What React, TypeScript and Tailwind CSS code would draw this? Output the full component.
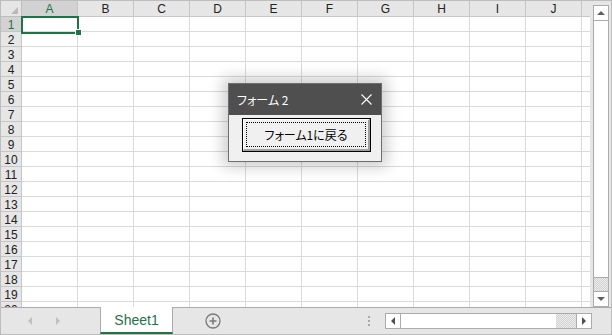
import React from "react";

const COLS = ["A", "B", "C", "D", "E", "F", "G", "H", "I", "J"];
const ROWS = Array.from({ length: 20 }, (_, i) => i + 1);

const checker =
  "bg-[repeating-conic-gradient(#d2d2d2_0_25%,#ececec_0_50%)] bg-[length:2px_2px]";

function Tri({ dir, color }: { dir: "l" | "r" | "u" | "d"; color: string }) {
  const pts =
    dir === "l"
      ? "4,0 4,8 0,4"
      : dir === "r"
      ? "0,0 0,8 4,4"
      : dir === "u"
      ? "0,4 8,4 4,0"
      : "0,0 8,0 4,4";
  const w = dir === "l" || dir === "r" ? 4 : 8;
  const h = dir === "l" || dir === "r" ? 8 : 4;
  return (
    <svg width={w} height={h} viewBox={`0 0 ${w} ${h}`}>
      <polygon points={pts} fill={color} />
    </svg>
  );
}

function Grid() {
  return (
    <div className="relative w-[589px] h-full overflow-hidden bg-white">
      {/* header */}
      <div className="flex h-[16px]">
        <div className="relative w-[21px] shrink-0 bg-[#e6e6e6] border-r border-b border-[#bdbdbd]">
          <svg className="absolute right-[3px] bottom-[2px]" width="7" height="7" viewBox="0 0 7 7">
            <polygon points="7,0 7,7 0,7" fill="#b9b9b9" />
          </svg>
        </div>
        {COLS.map((c) => (
          <div
            key={c}
            className={`w-[56px] shrink-0 border-r border-b border-[#c6c6c6] text-center text-[12px] leading-[17px] ${
              c === "A" ? "bg-[#d2d2d2] text-[#217346] border-b-[#217346]" : "bg-[#e6e6e6] text-[#222]"
            }`}
          >
            {c}
          </div>
        ))}
        <div className="flex-1 bg-[#e6e6e6] border-b border-[#c6c6c6]" />
      </div>
      {ROWS.map((r) => (
        <div key={r} className="flex h-[15px]">
          <div
            className={`w-[21px] shrink-0 border-r border-b border-[#c6c6c6] text-center text-[12px] leading-[16px] ${
              r === 1 ? "bg-[#d2d2d2] text-[#217346] border-r-[#217346]" : "bg-[#e6e6e6] text-[#222]"
            }`}
          >
            {r}
          </div>
          {COLS.map((c) => (
            <div key={c} className="w-[56px] shrink-0 border-r border-b border-[#dadada]" />
          ))}
          <div className="flex-1 border-b border-[#dadada]" />
        </div>
      ))}
      {/* selection */}
      <div className="absolute left-[20px] top-[15px] w-[58px] h-[18px] border-2 border-[#217346]" />
      <div className="absolute left-[74px] top-[28px] w-[7px] h-[7px] bg-[#217346] border border-white" />
    </div>
  );
}

function VScroll() {
  return (
    <div className="w-[21px] h-full bg-[#e6e6e6] pt-[4px] pl-[3px] pr-[2px] flex">
      <div className={`flex-1 flex flex-col border border-[#ababab] ${checker}`}>
        <div className="h-[15px] shrink-0 bg-white border-b border-[#ababab] flex items-center justify-center">
          <Tri dir="u" color="#606060" />
        </div>
        <div className="h-[257px] shrink-0 bg-white border-b border-[#ababab]" />
        <div className="flex-1" />
        <div className="h-[15px] shrink-0 bg-white border-t border-[#ababab] flex items-center justify-center">
          <Tri dir="d" color="#606060" />
        </div>
      </div>
    </div>
  );
}

function TabBar() {
  return (
    <div className="flex h-[27px] bg-[#e6e6e6]">
      <div className="w-[99px] border-t border-[#ababab] flex items-center">
        <div className="ml-[27px]">
          <Tri dir="l" color="#c0c0c0" />
        </div>
        <div className="ml-[24px]">
          <Tri dir="r" color="#c0c0c0" />
        </div>
      </div>
      <div className="w-[73px] bg-white border-l border-r border-[#ababab] border-b-2 border-b-[#217346] flex items-center justify-center text-[14px] text-[#217346] pt-[1px]">
        Sheet1
      </div>
      <div className="flex-1 border-t border-[#ababab] flex items-center">
        <svg className="ml-[32px]" width="16" height="16" viewBox="0 0 16 16">
          <circle cx="8" cy="8" r="7" fill="none" stroke="#7a7a7a" strokeWidth="1.3" />
          <path d="M8 4.5v7M4.5 8h7" stroke="#7a7a7a" strokeWidth="1.6" />
        </svg>
        <div className="ml-auto flex flex-col gap-[2px]">
          <div className="w-[2px] h-[2px] bg-[#a8a8a8]" />
          <div className="w-[2px] h-[2px] bg-[#a8a8a8]" />
          <div className="w-[2px] h-[2px] bg-[#a8a8a8]" />
        </div>
        <div className={`ml-[15px] mr-[19px] w-[207px] h-[16px] flex border border-[#ababab] ${checker}`}>
          <div className="w-[15px] shrink-0 bg-white border-r border-[#ababab] flex items-center justify-center">
            <Tri dir="l" color="#505050" />
          </div>
          <div className="flex-1 bg-white" />
          <div className="w-[20px] shrink-0" />
          <div className="w-[15px] shrink-0 bg-white border-l border-[#ababab] flex items-center justify-center">
            <Tri dir="r" color="#505050" />
          </div>
        </div>
      </div>
    </div>
  );
}

function UserForm() {
  return (
    <div className="absolute left-[227px] top-[82px] w-[154px] h-[79px] flex flex-col border border-[#6e6e6e] bg-[#f0f0f0] shadow-[0_0_14px_5px_rgba(0,0,0,0.2)] font-['Noto_Sans_CJK_JP',sans-serif] [font-feature-settings:'palt']">
      <div className="h-[31px] shrink-0 bg-[#4f4f4f] flex items-center pl-[8px] pr-[9px] text-white text-[12px]">
        <span>フォーム 2</span>
        <svg className="ml-auto" width="11" height="11" viewBox="0 0 11 11">
          <path d="M0.5 0.5l10 10M10.5 0.5l-10 10" stroke="#ffffff" strokeWidth="1.1" />
        </svg>
      </div>
      <div className="pt-[3px] pl-[13px]">
        <div className="w-[129px] h-[34px] border border-black">
          <div className="w-full h-full border-t border-l border-white border-r-2 border-b-2 border-r-[#a0a0a0] border-b-[#a0a0a0] bg-[#f0f0f0] p-[2px]">
            <div className="w-full h-full border border-dotted border-black flex items-center justify-center text-[12px] text-black">
              フォーム1に戻る
            </div>
          </div>
        </div>
      </div>
    </div>
  );
}

export default function App() {
  return (
    <div className="relative w-[612px] h-[335px] border border-[#bdbdbd] bg-[#e6e6e6] flex flex-col overflow-hidden font-['Liberation_Sans','Noto_Sans_CJK_JP',sans-serif]">
      <div className="flex h-[306px]">
        <Grid />
        <VScroll />
      </div>
      <TabBar />
      <UserForm />
    </div>
  );
}
